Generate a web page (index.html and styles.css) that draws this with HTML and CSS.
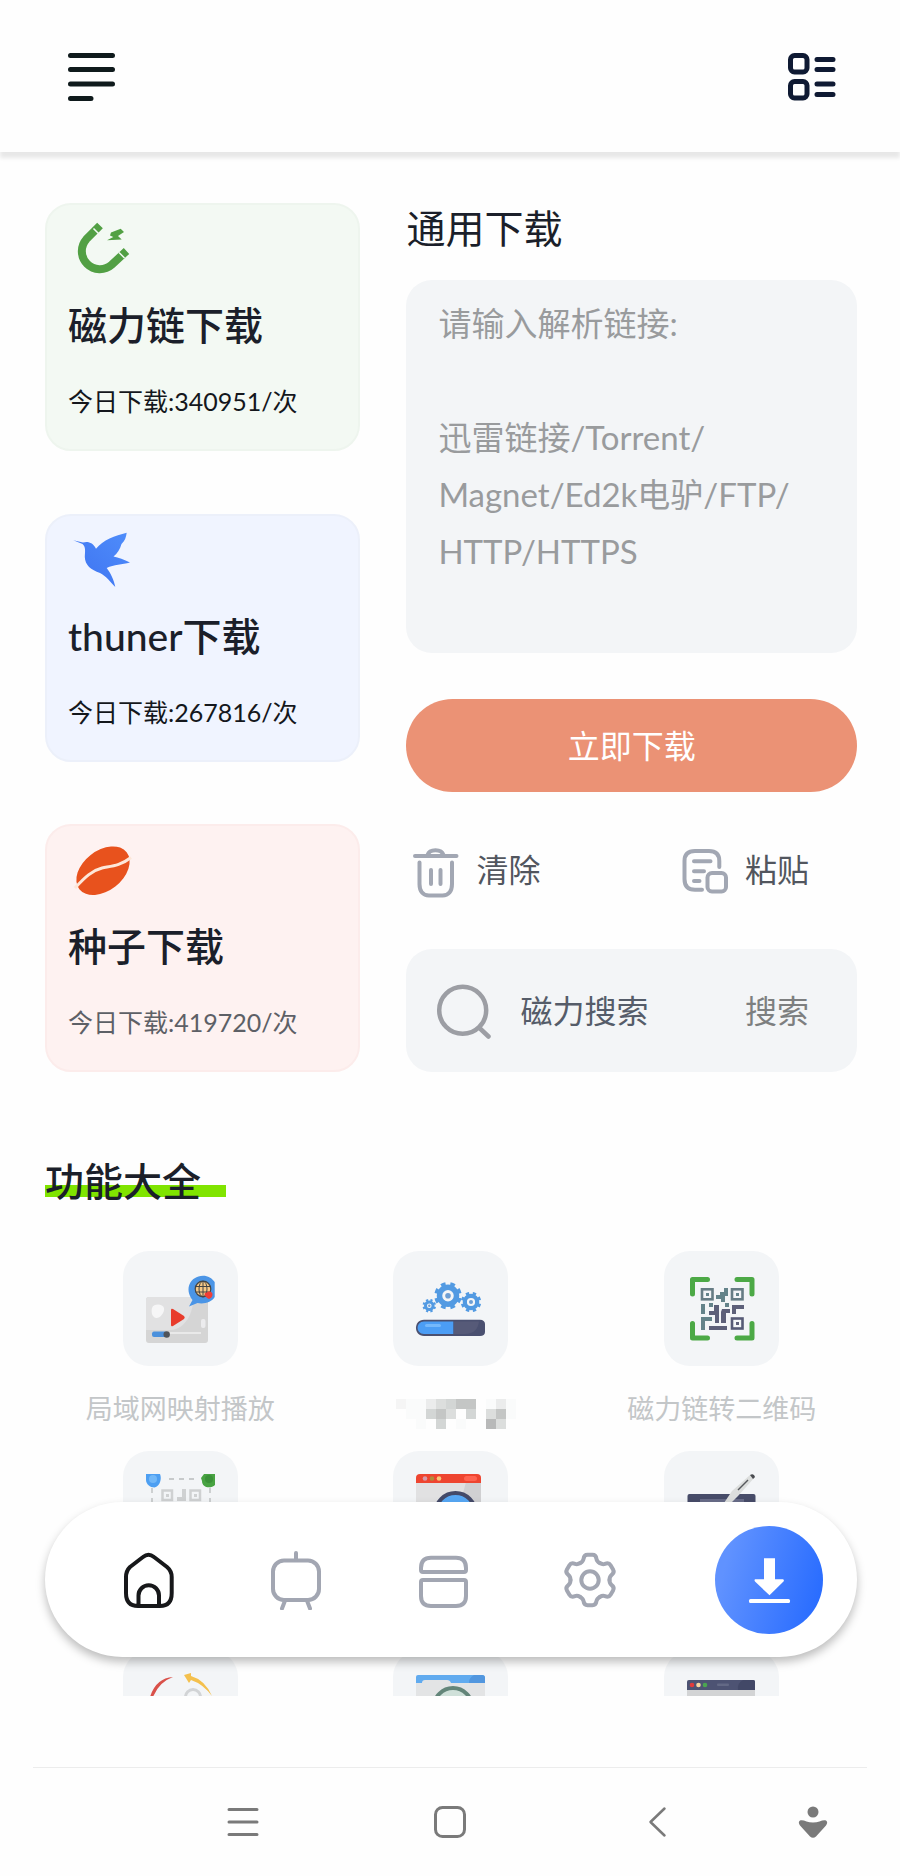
FILE: index.html
```html
<!DOCTYPE html>
<html lang="zh-CN">
<head>
<meta charset="utf-8">
<meta name="viewport" content="width=device-width, initial-scale=1">
<title>通用下载</title>
<link rel="stylesheet" href="styles.css">
</head>
<body>
<div class="app">
  <header class="topbar">
    <button class="icon-btn" type="button" aria-label="菜单">
      <svg width="48" height="48" viewBox="0 0 48 48" stroke="#0f1a1c" stroke-width="5" stroke-linecap="round"><path d="M2.500 2.500H44.500M2.500 16.500H44.500M2.500 31H44.500M2.500 45.500H23"/></svg>
    </button>
    <button class="icon-btn" type="button" aria-label="列表">
      <svg width="48" height="48" viewBox="0 0 48 48" fill="none" stroke="#0f1a33" stroke-width="5" stroke-linecap="round"><rect x="2.500" y="2.500" width="16.500" height="16.500" rx="4"/><rect x="2.500" y="28.500" width="16.500" height="16.500" rx="4"/><path d="M29 6.500H45M29 16.500H45M29 31H45M29 41.500H45"/></svg>
    </button>
  </header>

  <main class="content">
    <div class="columns">
      <section class="cards">
        <a class="card card-green" href="#magnet">
          <svg class="card-icon" viewBox="0 0 60 60" fill="none">
            <path d="M32 5.500L18.300 19.300A18 18 0 0 0 43.700 44.700L58.500 31" stroke="#52a044" stroke-width="8"/>
            <path d="M25.500 8.500L31 14M51 32.500L56.500 38" stroke="#f3f9f3" stroke-width="1.500"/>
            <path d="M43 12.500L52.700 8.700 56 12 50 16 53.700 19.500 39 20.200 45.300 17 42 15.500Z" fill="#52a044"/>
          </svg>
          <h2 class="card-title">磁力链下载</h2>
          <p class="card-count">今日下载:340951/次</p>
        </a>
        <a class="card card-blue" href="#thunder">
          <svg class="card-icon" viewBox="0 0 60 60">
            <defs><linearGradient id="bird" x1="1" y1="0" x2="0" y2="1"><stop offset="0" stop-color="#4f8dfb"/><stop offset="1" stop-color="#3d72f0"/></linearGradient></defs>
            <path fill="url(#bird)" d="M5.300 9.300L15 11.500C20 10 25 11.500 28 17.700C35 9 47 4.500 58.700 1.700C58 6 57 10 53.500 13C52 18 49.500 22.500 45.500 25.500C50.500 26.500 56 28.500 62 31.500C54 33.500 46 33.500 38.700 37C42.500 42 46 49 47.300 56C42 50.500 38 45 32 42C23 39 17 34 16.800 26C17 21 18 16 14.500 13Z"/>
          </svg>
          <h2 class="card-title">thuner下载</h2>
          <p class="card-count">今日下载:267816/次</p>
        </a>
        <a class="card card-red" href="#torrent">
          <svg class="card-icon" viewBox="0 0 60 60">
            <ellipse cx="35" cy="29.700" rx="30" ry="20" transform="rotate(-38 35 29.700)" fill="#e8521d"/>
            <path d="M7 47C17 36 24 29.500 34 27C44 25 52 25 63 16.500" fill="none" stroke="#fde7d9" stroke-width="3"/>
          </svg>
          <h2 class="card-title">种子下载</h2>
          <p class="card-count muted">今日下载:419720/次</p>
        </a>
      </section>

      <section class="download">
        <h1 class="heading"><label for="links">通用下载</label></h1>
        <textarea class="links" id="links" placeholder="请输入解析链接:&#10;&#10;迅雷链接/Torrent/&#10;Magnet/Ed2k电驴/FTP/&#10;HTTP/HTTPS"></textarea>
        <button class="primary" type="button">立即下载</button>
        <div class="actions">
          <button class="action" type="button">
            <svg width="46" height="50" viewBox="0 0 46 50" fill="none" stroke="#a2a7b3" stroke-width="4" stroke-linecap="round"><path d="M2 8H43.500M14.500 7C16.500 0.500 28.500 0.500 30.500 7M6.500 14.500V36C6.500 43.500 10 47.500 16 47.500H29.500C35.500 47.500 39 43.500 39 36V14.500M18 22V36M27.500 22V36"/></svg>
            <span class="action-text">清除</span>
          </button>
          <button class="action" type="button">
            <svg width="46" height="50" viewBox="0 0 46 50" fill="none" stroke="#a2a7b3" stroke-width="4" stroke-linecap="round"><path d="M37.300 19V13C37.300 6 34 3 27 3H13C6 3 2.500 6 2.500 13V31C2.500 38 6 41.700 13 41.700H20M12 13.300H28.500M12 23.300H22M12 33H17.500"/><rect x="25.500" y="25" width="18.500" height="18.500" rx="4.500"/></svg>
            <span class="action-text">粘贴</span>
          </button>
        </div>
        <form class="search">
          <svg width="56" height="56" viewBox="0 0 56 56" fill="none" stroke="#9c9ea4" stroke-width="4.500" stroke-linecap="round"><circle cx="26.700" cy="27.300" r="23.500"/><path d="M44 45.500L52.500 53.500"/></svg>
          <input class="search-input" type="text" placeholder="磁力搜索" aria-label="磁力搜索">
          <button class="search-btn" type="button">搜索</button>
        </form>
      </section>
    </div>

    <section class="features">
      <h2 class="heading marked">功能大全</h2>
      <div class="grid">
        <button class="feature" type="button">
          <svg class="tile" viewBox="0 0 115 115">
            <rect x="23" y="46" width="62" height="46" rx="3" fill="#d5d5d5"/>
            <path d="M26 46H70C71 62 62 78 48 79H23V49Q23 46 26 46Z" fill="#e1e1e2"/>
            <path d="M29 57C31 52 40 53 41 57C42 62 36 68 33 67C29 66 28 61 29 57Z" fill="#f6f6f7"/>
            <rect x="78" y="68" width="4.500" height="9" rx="2" fill="#ececee"/>
            <path d="M48 59Q48 57 50 58L61 65Q62.500 66.500 61 68L50 75Q48 76 48 74Z" fill="#e83c2c"/>
            <path d="M29 82H78" stroke="#efefef" stroke-width="1.500"/>
            <rect x="29" y="80.500" width="15" height="5.500" rx="2" fill="#4a90dc"/>
            <circle cx="43.700" cy="83.500" r="3.200" fill="#50545a"/>
            <path d="M91.700 31V46C89 51 81 53.500 74.500 52L66 55.500L69.500 49C61 38 67 25 80 24.700C85 24.700 89 27 91.700 31Z" fill="#4b95e6"/>
            <circle cx="80" cy="38" r="7.800" fill="#f7c987" stroke="#454545" stroke-width="1.200"/>
            <path d="M72.500 35.500H87.500M72.500 41H87.500M80 30V46" stroke="#454545" fill="none"/><ellipse cx="80" cy="38" rx="4" ry="7.800" stroke="#454545" fill="none"/>
            <path d="M86 48C80 45 81 41 84 41.500C85 40 89.500 40 89.500 43.500C89.500 45.500 88 47 86 48Z" fill="#ef3e37"/>
          </svg>
          <span class="label">局域网映射播放</span>
        </button>
        <button class="feature" type="button" aria-label="功能">
          <svg class="tile" viewBox="0 0 115 115">
            <g fill="none" stroke="#529ae2">
              <circle cx="55" cy="44.700" r="8.500" stroke-width="5.500"/><circle cx="55" cy="44.700" r="12" stroke-width="3.500" pathLength="16" stroke-dasharray="1 1" transform="rotate(11 55 44.700)"/>
              <circle cx="78" cy="51" r="6.200" stroke-width="4.200"/><circle cx="78" cy="51" r="8.700" stroke-width="3" pathLength="16" stroke-dasharray="1 1" transform="rotate(11 78 51)"/>
              <circle cx="36.300" cy="54.700" r="3.800" stroke-width="3"/><circle cx="36.300" cy="54.700" r="5.700" stroke-width="2.200" pathLength="16" stroke-dasharray="1 1" transform="rotate(11 36.300 54.700)"/>
            </g>
            <g fill="#6d9ed4"><circle cx="55" cy="44.700" r="2.800"/><circle cx="78" cy="51" r="2"/><circle cx="36.300" cy="54.700" r="1.200"/></g>
            <path d="M31 68.700H87C90 68.700 92 70.500 92 73V81C92 83.500 90 85 87 85H31C20.300 85 20.300 68.700 31 68.700Z" fill="#4a5070"/>
            <path d="M31 70.500H60.300V83H31C22.500 83 22.500 70.500 31 70.500Z" fill="#4b9df5"/>
            <rect x="32" y="73" width="16" height="3" rx="1.500" fill="#75b8fb"/>
            <path d="M61 70.500H86C85 78 81 83 72 83H61Z" fill="#565a78"/>
          </svg>
          <svg class="mosaic" width="130" height="30" viewBox="-10 0 130 30" shape-rendering="crispEdges">
            <path fill="#fafbfb" d="M10 0h20v10h-20zM10 10h20v10h-20zM20 20h10v10h-10zM60 20h10v10h-10zM90 0h10v10h-10zM110 0h10v20h-10z"/>
            <path fill="#f5f5f5" d="M0 0h10v10h-10z"/><path fill="#ebecec" d="M30 0h10v10h-10zM100 0h10v10h-10z"/>
            <path fill="#dcdedd" d="M40 0h10v10h-10zM50 10h10v10h-10zM90 10h10v10h-10zM100 20h10v10h-10z"/>
            <path fill="#d3d6d5" d="M50 0h10v10h-10zM30 10h10v10h-10zM70 10h10v10h-10zM40 20h10v10h-10z"/>
            <path fill="#c4c6c5" d="M60 0h20v10h-20zM40 10h10v10h-10zM100 10h10v10h-10z"/><path fill="#b8b9b9" d="M90 20h10v10h-10z"/>
          </svg>
        </button>
        <button class="feature" type="button">
          <svg class="tile" viewBox="0 0 115 115">
            <path d="M28.500 43V28.500H43.500M73 28.500H88V43M88 72.500V87H73M43.500 87H28.500V72.500" fill="none" stroke="#4ca946" stroke-width="5" stroke-linecap="round" stroke-linejoin="round"/>
            <g fill="none" stroke="#667c84" stroke-width="2.600"><rect x="38" y="38.300" width="10.500" height="10"/><rect x="68" y="38.300" width="10.500" height="10"/><rect x="68" y="67.500" width="10.500" height="10" stroke="#565a76"/></g>
            <path d="M42 42h3v3h-3zM72 42h3v3h-3zM60 37h4v8h-3v6h-4v-3h-5v-4h4v-3h4zM37 53h4v10h-4zM45 52h4v4h-4zM61 52h4v4h-4zM37 66h11v4h-7v9h-4z" fill="#64838a"/>
            <path d="M50 54h5v18h-4v-8h-6v-4h5zM58 58h8v4h-4v10h-5v-11zM68 54h12v4h-8v5h-4zM45 75h18v4h-18zM72 71h3v3h-3z" fill="#5d6079"/>
          </svg>
          <span class="label">磁力链转二维码</span>
        </button>

        <button class="feature" type="button" aria-label="功能">
          <svg class="tile" viewBox="0 0 115 115">
            <path d="M46 28H72M29 37V60M87 37V60" stroke="#b9bcbd" stroke-width="1.300" stroke-dasharray="5 5"/>
            <path d="M23 23H37C39 28 37 35 31.500 36.500C27 36.500 23 33 23 29Z" fill="#4d9ff2"/><circle cx="30" cy="28" r="4" fill="#72b8f8"/>
            <path d="M78 27L81 23H92V34C88 38 79 37 79 30Z" fill="#48a342"/><circle cx="86" cy="28" r="4" fill="#3b9138"/>
            <g fill="none" stroke="#cfd1d2" stroke-width="2.500"><rect x="39.500" y="39.500" width="9.500" height="9.500"/><rect x="67.500" y="39.500" width="9.500" height="9.500"/></g>
            <path d="M43 43h3v3h-3zM71 43h3v3h-3zM59 38h4v12h-9v-4h5z" fill="#cfd1d2"/>
          </svg>
        </button>
        <button class="feature" type="button" aria-label="功能">
          <svg class="tile" viewBox="0 0 115 115">
            <rect x="23" y="24" width="65" height="62" rx="3" fill="#e1e1e2"/><path d="M73 31H88V80H60Z" fill="#d0d0d2"/>
            <path d="M23 32V27Q23 23 27 23H84Q88 23 88 27V32Z" fill="#ee4530"/><rect x="71" y="25" width="13" height="5" rx="2.500" fill="#ff6350"/>
            <circle cx="32" cy="27.500" r="2.300" fill="#d79aa8"/><circle cx="39" cy="27.500" r="2.300" fill="#b18d3a"/><circle cx="46" cy="27.500" r="2.300" fill="#f8c576"/>
            <circle cx="62.500" cy="62" r="20" fill="#57a8f5" stroke="#444a69" stroke-width="4"/>
          </svg>
        </button>
        <button class="feature" type="button" aria-label="功能">
          <svg class="tile" viewBox="0 0 115 115">
            <rect x="23.500" y="43" width="68" height="46" rx="2" fill="#474c69"/><rect x="36" y="48" width="44" height="36" fill="#686c88"/>
            <path d="M60 52L68 40L86 24Q90 22 91 26L74 45L66 53Z" fill="#dcdedd"/><path d="M74 39L84 29" stroke="#56585d" stroke-width="1.500"/><path d="M86 24Q90 22 91 26L89 28Z" fill="#494b50"/>
          </svg>
        </button>

        <button class="feature" type="button" aria-label="功能">
          <svg class="tile" viewBox="0 0 115 115">
            <path d="M50 26Q33 27 27 46H30Q36 31 50 26Z" fill="#d9514a"/>
            <path d="M61 24L68 22L68 25Q82 29 89 45Q80 33 68 29L66 32Z" fill="#f4c04d"/>
            <circle cx="70" cy="46" r="7.500" fill="none" stroke="#d2d4d6" stroke-width="3"/>
          </svg>
        </button>
        <button class="feature" type="button" aria-label="功能">
          <svg class="tile" viewBox="0 0 115 115">
            <path d="M23 26Q23 24 25 24H89Q92 24 92 27V60H23Z" fill="#61abef"/><path d="M76 60V31Q76 27 81 24H89Q92 24 92 27V60Z" fill="#5297df"/>
            <path d="M23 32H29Q29 29 32 29H54Q57 29 58 32H92V80H23Z" fill="#e3e4e5"/>
            <circle cx="60" cy="56" r="19" fill="#cfe0d9" stroke="#638579" stroke-width="4"/>
          </svg>
        </button>
        <button class="feature" type="button" aria-label="功能">
          <svg class="tile" viewBox="0 0 115 115">
            <rect x="23" y="29" width="68" height="50" rx="2" fill="#d3d4d5"/><path d="M23 39V31Q23 29 25 29H89Q91 29 91 31V39Z" fill="#4d5373"/><path d="M74 39Q73 32 79 29H89Q91 29 91 31V39Z" fill="#424867"/>
            <circle cx="28" cy="34" r="2.300" fill="#e23b3b"/><circle cx="34.500" cy="34" r="2.300" fill="#f6d6a0"/><circle cx="41" cy="34" r="2.300" fill="#4ba550"/><rect x="53" y="32.500" width="12" height="2.500" rx="1" fill="#636985"/>
          </svg>
        </button>
      </div>
    </section>
  </main>

  <nav class="dock">
    <a class="dock-item active" href="#home" aria-label="首页">
      <svg width="60" height="60" viewBox="0 0 60 60"><path d="M24 7Q29.500 2.500 35 7L48 17Q52.700 21 52.700 27V43Q52.700 56 41 56H19Q7 56 7 43V27Q7 21 11 17ZM19.500 56V45.500A10.200 10.200 0 0 1 40 45.500V56"/></svg>
    </a>
    <a class="dock-item" href="#tv" aria-label="视频">
      <svg width="60" height="60" viewBox="0 0 60 60"><rect x="7" y="10.500" width="46" height="39.500" rx="11"/><path d="M30 3V10M18.500 52L16 58.500M41.500 52L44 58.500"/></svg>
    </a>
    <a class="dock-item" href="#cards" aria-label="卡片">
      <svg width="60" height="60" viewBox="0 0 60 60"><path d="M18 7.700H43Q53 7.700 53 18V20Q53 22 51 22H10Q8 22 8 20V18Q8 7.700 18 7.700ZM10 30H51Q53 30 53 32V46Q53 56 43 56H18Q8 56 8 46V32Q8 30 10 30Z"/></svg>
    </a>
    <a class="dock-item" href="#settings" aria-label="设置">
      <svg width="60" height="60" viewBox="0 0 60 60">
        <defs><path id="tooth" d="M20.250 13.100C22.500 11.800 23.200 11 23.500 9C23.900 6 25 4.800 27.500 4.800H32.500C35 4.800 36.100 6 36.500 9C36.800 11 37.500 11.800 39.750 13.100"/></defs>
        <use href="#tooth"/><use href="#tooth" transform="rotate(60 30 30)"/><use href="#tooth" transform="rotate(120 30 30)"/><use href="#tooth" transform="rotate(180 30 30)"/><use href="#tooth" transform="rotate(240 30 30)"/><use href="#tooth" transform="rotate(300 30 30)"/>
        <circle cx="30" cy="30" r="8.700"/>
      </svg>
    </a>
    <button class="fab" type="button" aria-label="下载">
      <svg width="108" height="108" viewBox="0 0 108 108" fill="#fff"><path d="M49 32.300H60V53.300H68Q69.500 54 68.500 55.500L54.500 69.300L40 55.500Q39 54 40 53.300H49Z"/><rect x="34" y="73" width="41" height="4" rx="1.500"/></svg>
    </button>
  </nav>

  <footer class="sysbar">
    <button class="icon-btn" type="button" aria-label="最近任务"><svg width="32" height="32" viewBox="0 0 32 32" stroke="#7a7a7a" stroke-width="3" stroke-linecap="round"><path d="M2 3.500H30M2 16H30M2 28.500H30"/></svg></button>
    <button class="icon-btn" type="button" aria-label="主屏幕"><svg width="32" height="32" viewBox="0 0 32 32" fill="none" stroke="#7a7a7a" stroke-width="3"><rect x="1.500" y="1.500" width="29" height="29" rx="7"/></svg></button>
    <button class="icon-btn" type="button" aria-label="返回"><svg width="32" height="32" viewBox="0 0 32 32" fill="none" stroke="#7a7a7a" stroke-width="2.500" stroke-linecap="round" stroke-linejoin="round"><path d="M22.500 2.500L8.500 16L22.500 29.500"/></svg></button>
    <button class="icon-btn" type="button" aria-label="辅助"><svg width="32" height="32" viewBox="0 0 32 32" fill="#7a7a7a"><circle cx="16" cy="6" r="5.500"/><path d="M3 14.500C6 13 10 16.500 16 16.500C22 16.500 26 13 29 14.500C31 16 30 18 29 19.500L19 30.500Q16 33 13 30.500L3 19.500C2 18 1 16 3 14.500Z"/></svg></button>
  </footer>
</div>
</body>
</html>
```
FILE: styles.css
```css
* { box-sizing: border-box; }

body {
  margin: 0;
  background: #fefefe;
  color: #1b1f2a;
  font-family: Lato, "Noto Sans CJK SC", sans-serif;
}

h1, h2, p { margin: 0; }

button, input, textarea {
  margin: 0;
  padding: 0;
  border: 0;
  background: none;
  color: inherit;
  font: inherit;
}

a { color: inherit; text-decoration: none; }
svg { display: block; flex: none; }

.app {
  position: relative;
  display: flex;
  flex-direction: column;
  height: 100vh;
  overflow: hidden;
}

.topbar {
  display: flex;
  flex: none;
  align-items: center;
  justify-content: space-between;
  height: 152px;
  padding: 2px 64px 0 68px;
  box-shadow: 0 6px 4px rgba(0, 0, 0, 0.09);
}

.content {
  flex: 1;
  min-height: 0;
  margin-bottom: 71px;
  padding: 51px 43px 0 45px;
  overflow: hidden;
}

.columns {
  display: grid;
  grid-template-columns: minmax(0, 7fr) minmax(0, 10fr);
  column-gap: 46px;
}

.cards {
  display: flex;
  flex-direction: column;
  justify-content: space-between;
}

.card {
  display: block;
  height: 248px;
  padding: 15px 21px;
  border: 2px solid;
  border-radius: 26px;
}

.card-green { background: #f3f9f3; border-color: #eef5ee; }
.card-blue { background: #f0f4ff; border-color: #ecf0fa; }
.card-red { background: #fef2f1; border-color: #fceceb; }

.card-icon {
  width: 60px;
  height: 60px;
  margin-bottom: 17px;
  overflow: visible;
}

.card-title {
  margin-bottom: 30px;
  font-size: 39px;
  font-weight: 500;
  line-height: 56px;
}

.card-count {
  color: #14171c;
  font-size: 25px;
  line-height: 36px;
}

.card-count.muted { color: #5d6066; }

.download {
  display: flex;
  flex-direction: column;
}

.heading {
  font-size: 39px;
  font-weight: 500;
  line-height: 50px;
}

h1.heading { font-weight: 400; }

.links {
  width: 100%;
  height: 373px;
  margin-top: 27px;
  padding: 15px 32px;
  border-radius: 26px;
  background: #f3f5f7;
  font-size: 33px;
  line-height: 57px;
  resize: none;
}

.links::placeholder { color: #999b9d; opacity: 1; }

.primary {
  height: 93px;
  margin-top: 46px;
  padding-bottom: 4px;
  border-radius: 47px;
  background: #eb9275;
  color: #fff;
  font-size: 32px;
}

.actions {
  display: flex;
  justify-content: space-between;
  margin-top: 56px;
  padding: 0 48px 0 7px;
}

.action {
  display: flex;
  align-items: center;
  gap: 17px;
  height: 50px;
  color: #52565e;
  font-size: 32px;
  line-height: 44px;
}

.action-text { padding-bottom: 6px; }

.search {
  display: flex;
  align-items: center;
  gap: 28px;
  height: 123px;
  margin-top: 51px;
  padding: 0 48px 0 30px;
  border-radius: 26px;
  background: #f3f5f7;
  font-size: 32px;
}

.search-input {
  flex: 1;
  min-width: 0;
  height: 60px;
}

.search-input::placeholder { color: #555c69; opacity: 1; }

.search-btn {
  padding-bottom: 4px;
  color: #7d7f80;
}

.features { margin-top: 84px; }

.marked {
  width: fit-content;
  padding-right: 25px;
  background: linear-gradient(#80e400, #80e400) 0 29px / 100% 12px no-repeat;
}

.grid {
  display: grid;
  grid-template-columns: repeat(3, 1fr);
  grid-auto-rows: 177px;
  row-gap: 23px;
  margin-top: 45px;
}

.feature {
  display: flex;
  flex-direction: column;
  align-items: center;
}

.tile {
  width: 115px;
  height: 115px;
  border-radius: 26px;
  background: #f3f5f7;
}

.label {
  margin-top: 23px;
  color: #c3c6c8;
  font-size: 27px;
  line-height: 40px;
}

.mosaic { margin-top: 33px; }

.dock {
  position: absolute;
  right: 43px;
  bottom: 219px;
  left: 45px;
  display: flex;
  align-items: center;
  height: 155px;
  padding: 0 34px 0 30px;
  border-radius: 78px;
  background: #fff;
  box-shadow: 0 5px 10px rgba(0, 0, 0, 0.26);
}

.dock-item {
  display: flex;
  flex: 1;
  justify-content: center;
  color: #a2a6b2;
}

.dock-item svg {
  fill: none;
  stroke: currentColor;
  stroke-width: 4;
  stroke-linecap: round;
  stroke-linejoin: round;
}

.dock-item.active { color: #17181a; }

.fab {
  margin-left: 52px;
  border-radius: 50%;
  background: linear-gradient(105deg, #6092ff 15%, #2a6dff 90%);
}

.sysbar {
  display: grid;
  flex: none;
  grid-template-columns: 2fr 2fr 2fr 1fr;
  align-items: center;
  justify-items: center;
  height: 109px;
  margin: 0 33px;
  padding: 0 2px 0 106px;
  border-top: 1px solid #ececec;
}
```
